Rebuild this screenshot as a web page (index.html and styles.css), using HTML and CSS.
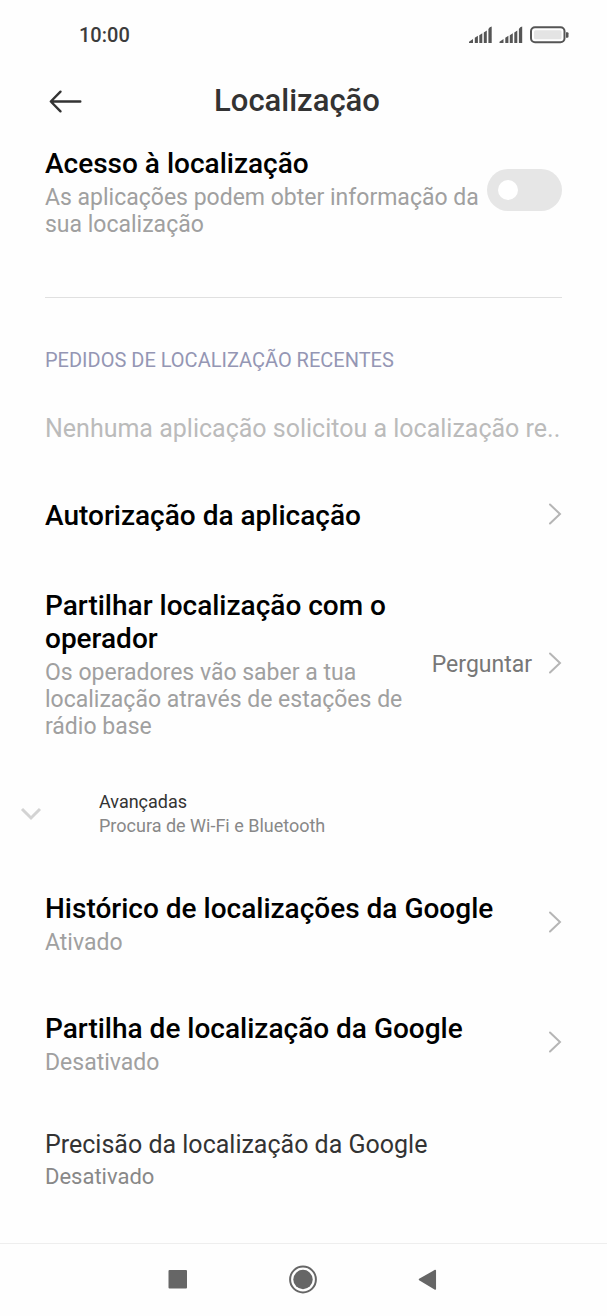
FILE: index.html
```html
<!DOCTYPE html>
<html lang="pt">
<head>
<meta charset="utf-8">
<meta name="viewport" content="width=device-width, initial-scale=1">
<title>Localização</title>
<link rel="stylesheet" href="styles.css">
</head>
<body>
<div class="statusbar">
  <span class="clock">10:00</span>
  <svg class="status-icons" width="101" height="18" viewBox="0 0 101 18" aria-hidden="true">
    <g fill="#555">
      <path d="M0 17V15.800L4 13V17ZM5.800 17V11.800L8.900 9.800V17ZM10.300 17V9.200L13.300 7.200V17ZM14.800 17V6.500L17.800 4.500V17ZM19.400 17V3Q20.500 .8 22.700.6V17Z"/>
      <path d="M30.500 17V15.800L34.500 13V17ZM36.300 17V11.800L39.400 9.800V17ZM40.800 17V9.200L43.800 7.200V17ZM45.300 17V6.500L48.300 4.500V17ZM49.900 17V3Q51 .8 53.200.6V17Z"/>
      <path d="M97 6.300h1.300q1.200 0 1.200 1v3.400q0 1-1.200 1H97z"/>
    </g>
    <rect x="62" y="1.300" width="33.500" height="15" rx="4" fill="#fff" stroke="#555" stroke-width="2"/>
    <rect x="65" y="4.300" width="27.500" height="9" rx="1.500" fill="#e4e4e4"/>
  </svg>
</div>
<header class="header">
  <button class="back" type="button" aria-label="Voltar">
    <svg width="34" height="24" viewBox="0 0 34 24" fill="none" stroke="#333" stroke-width="2.400" stroke-linecap="round" stroke-linejoin="round"><path d="M32.300 12.500H3M12.500 2.700L2.800 12.500l9.700 9.800"/></svg>
  </button>
  <h1 class="heading">Localização</h1>
</header>
<main class="content">
  <label class="row access">
    <span class="text">
      <span class="title">Acesso à localização</span>
      <span class="sub">As aplicações podem obter informação da sua localização</span>
    </span>
    <input class="switch" type="checkbox" role="switch">
  </label>
  <hr class="divider">
  <h2 class="section">PEDIDOS DE LOCALIZAÇÃO RECENTES</h2>
  <p class="empty">Nenhuma aplicação solicitou a localização re..</p>
  <button class="row permission" type="button">
    <span class="text"><span class="title">Autorização da aplicação</span></span>
    <svg class="chevron" width="14" height="22" viewBox="0 0 14 22"><path d="M2 1.500L12 11 2 20.500"/></svg>
  </button>
  <button class="row carrier" type="button">
    <span class="text">
      <span class="title">Partilhar localização com o operador</span>
      <span class="sub">Os operadores vão saber a tua localização através de estações de rádio base</span>
    </span>
    <span class="value">Perguntar</span>
    <svg class="chevron" width="14" height="22" viewBox="0 0 14 22"><path d="M2 1.500L12 11 2 20.500"/></svg>
  </button>
  <button class="advanced" type="button">
    <svg class="expand" width="22" height="14" viewBox="0 0 22 14"><path d="M2 2l9 9 9-9"/></svg>
    <span class="text">
      <span class="small-title">Avançadas</span>
      <span class="small-sub">Procura de Wi-Fi e Bluetooth</span>
    </span>
  </button>
  <button class="row history" type="button">
    <span class="text">
      <span class="title">Histórico de localizações da Google</span>
      <span class="sub">Ativado</span>
    </span>
    <svg class="chevron" width="14" height="22" viewBox="0 0 14 22"><path d="M2 1.500L12 11 2 20.500"/></svg>
  </button>
  <button class="row sharing" type="button">
    <span class="text">
      <span class="title">Partilha de localização da Google</span>
      <span class="sub">Desativado</span>
    </span>
    <svg class="chevron" width="14" height="22" viewBox="0 0 14 22"><path d="M2 1.500L12 11 2 20.500"/></svg>
  </button>
  <button class="row accuracy" type="button">
    <span class="text">
      <span class="plain-title">Precisão da localização da Google</span>
      <span class="sub dark">Desativado</span>
    </span>
  </button>
</main>
<nav class="navbar">
  <button class="nav" type="button" aria-label="Recentes"><svg width="30" height="30" viewBox="0 0 30 30"><rect x="5.500" y="6" width="18.500" height="18.500" rx="1" fill="#666"/></svg></button>
  <button class="nav" type="button" aria-label="Início"><svg width="30" height="30" viewBox="0 0 30 30"><circle cx="15" cy="15.500" r="12.900" fill="none" stroke="#666" stroke-width="2"/><circle cx="15" cy="15.500" r="9.700" fill="#666"/></svg></button>
  <button class="nav" type="button" aria-label="Anterior"><svg width="30" height="30" viewBox="0 0 30 30"><path d="M6.500 15.500L22.300 6.500v18.500z" fill="#666" stroke="#666" stroke-width="1.500" stroke-linejoin="round"/></svg></button>
</nav>
</body>
</html>
```
FILE: styles.css
```css
* { box-sizing: border-box; }
body {
  margin: 0;
  min-height: 100vh;
  display: flex;
  flex-direction: column;
  background: #fefefe;
  color: #000;
  font-family: Roboto, "Noto Sans", sans-serif;
}
button {
  border: 0;
  padding: 0;
  background: none;
  font: inherit;
  color: inherit;
  text-align: left;
}
svg { display: block; flex: none; }
.statusbar {
  display: flex;
  justify-content: space-between;
  align-items: center;
  height: 70px;
  padding: 0 37px 0 79px;
}
.clock { font-size: 20px; font-weight: 500; line-height: 24px; color: #3c3c3c; }
.header {
  display: grid;
  grid-template-columns: 34px 1fr 34px;
  align-items: center;
  height: 62px;
  padding: 0 61px 0 48px;
}
.heading {
  margin: 0;
  font-size: 31px;
  font-weight: 500;
  line-height: 38px;
  text-align: center;
  color: #333;
}
.content { flex: 1; display: flex; flex-direction: column; }
.row {
  display: flex;
  align-items: center;
  gap: 16px;
  padding: 0 45px;
}
.text { flex: 1; display: flex; flex-direction: column; }
.title { font-size: 28px; font-weight: 500; line-height: 33px; }
.sub { margin-top: 4px; font-size: 23px; line-height: 27px; color: #a0a0a0; }
.dark { margin-top: 2px; font-size: 22px; color: #888; }
.access { gap: 4px; padding-top: 15px; }
.switch {
  appearance: none;
  flex: none;
  display: flex;
  align-items: center;
  width: 75px;
  height: 42px;
  margin: 0 0 6px;
  padding: 0 11px;
  border-radius: 21px;
  background: #e6e6e6;
}
.switch::before {
  content: "";
  width: 20px;
  height: 20px;
  border-radius: 50%;
  background: #fff;
}
.switch:checked { justify-content: flex-end; background: #3482ff; }
.divider {
  width: auto;
  height: 1px;
  margin: 59px 45px 0;
  border: 0;
  background: #e0e0e0;
}
.section {
  margin: 50px 45px 0;
  font-size: 20px;
  font-weight: 400;
  line-height: 24px;
  color: #9496b4;
}
.empty {
  margin: 42px 45px 0;
  font-size: 25px;
  line-height: 30px;
  color: #bbb;
}
.permission { margin-top: 55px; }
.chevron {
  margin-bottom: 4px;
  fill: none;
  stroke: #b5b5b5;
  stroke-width: 2;
  stroke-linecap: round;
}
.carrier { margin-top: 57px; }
.value { font-size: 23px; line-height: 27px; color: #777; }
.advanced {
  display: flex;
  align-items: center;
  gap: 57px;
  margin-top: 50px;
  padding: 0 20px;
}
.expand { fill: none; stroke: #d3d3d3; stroke-width: 3; }
.small-title { font-size: 18px; line-height: 24px; color: #333; }
.small-sub { font-size: 18px; line-height: 24px; color: #888; }
.history { margin-top: 54px; }
.sharing { margin-top: 56px; }
.accuracy { margin-top: 52px; }
.plain-title { font-size: 25px; line-height: 33px; color: #333; }
.navbar {
  display: flex;
  justify-content: center;
  gap: 95px;
  height: 73px;
  padding: 20px 2px 0 0;
  border-top: 1px solid #eee;
}
.nav { height: 30px; }
```
